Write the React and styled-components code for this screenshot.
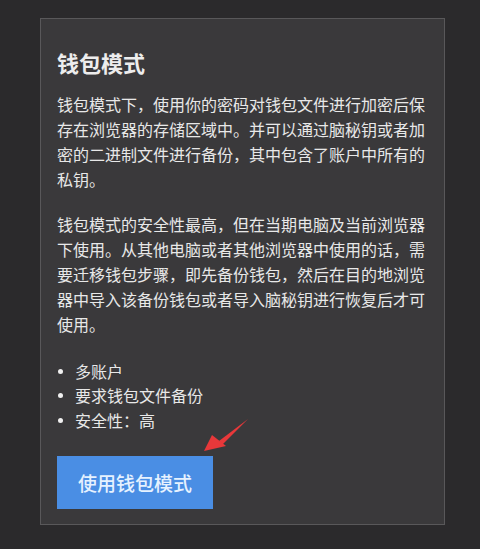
import React from "react";
import styled, { createGlobalStyle } from "styled-components";

const Global = createGlobalStyle`
  html, body { margin: 0; padding: 0; background: #2b2a2c; }
  body { font-family: "Noto Sans CJK SC", "Noto Sans", sans-serif; }
`;

const Page = styled.div`
  width: 480px;
  height: 549px;
  box-sizing: border-box;
  padding: 18px 0 0 40px;
  background: #2b2a2c;
  overflow: hidden;
`;

const Card = styled.section`
  position: relative;
  box-sizing: border-box;
  width: 405px;
  height: 507px;
  border: 1px solid #59585a;
  background: #3a393b;
  padding: 28px 17px 0 16px;
  color: #e8e8e8;
`;

const Title = styled.h2`
  margin: 0;
  font-size: 22px;
  line-height: 30px;
  font-weight: 700;
  color: #ededed;
`;

const Para = styled.p`
  margin: ${(p) => p.$top}px 0 0;
  width: 370px;
  font-size: 16px;
  line-height: 25px;
  letter-spacing: 0;
`;

const List = styled.ul`
  list-style: none;
  margin: 22px 0 0;
  padding: 0;
`;

const Item = styled.li`
  position: relative;
  padding-left: 18px;
  font-size: 16px;
  line-height: 24.3px;
  &::before {
    content: "";
    position: absolute;
    left: 1px;
    top: 10px;
    width: 5px;
    height: 5px;
    border-radius: 50%;
    background: #f0f0f0;
  }
`;

const Button = styled.button`
  display: block;
  margin-top: 24px;
  width: 156px;
  height: 53px;
  border: none;
  background: #4a8ee4;
  color: #e6f2ff;
  font-family: "Noto Sans CJK SC", sans-serif;
  font-size: 19px;
  font-weight: 500;
  cursor: pointer;
`;

const Arrow = styled.svg`
  position: absolute;
  left: 160px;
  top: 398px;
  width: 52px;
  height: 40px;
  overflow: visible;
`;

export default function App() {
  return (
    <>
      <Global />
      <Page>
        <Card>
          <Title>钱包模式</Title>
          <Para $top={15}>
            钱包模式下，使用你的密码对钱包文件进行加密后保存在浏览器的存储区域中。并可以通过脑秘钥或者加密的二进制文件进行备份，其中包含了账户中所有的私钥。
          </Para>
          <Para $top={20}>
            钱包模式的安全性最高，但在当期电脑及当前浏览器下使用。从其他电脑或者其他浏览器中使用的话，需要迁移钱包步骤，即先备份钱包，然后在目的地浏览器中导入该备份钱包或者导入脑秘钥进行恢复后才可使用。
          </Para>
          <List>
            <Item>多账户</Item>
            <Item>要求钱包文件备份</Item>
            <Item>安全性：高</Item>
          </List>
          <Button>使用钱包模式</Button>
          <Arrow viewBox="0 0 52 40">
            <path d="M47 2 L18 24 L21 28 Z" fill="#e8383a" />
            <path d="M3 34 L11 18 L25 29 Z" fill="#e8383a" />
          </Arrow>
        </Card>
      </Page>
    </>
  );
}
